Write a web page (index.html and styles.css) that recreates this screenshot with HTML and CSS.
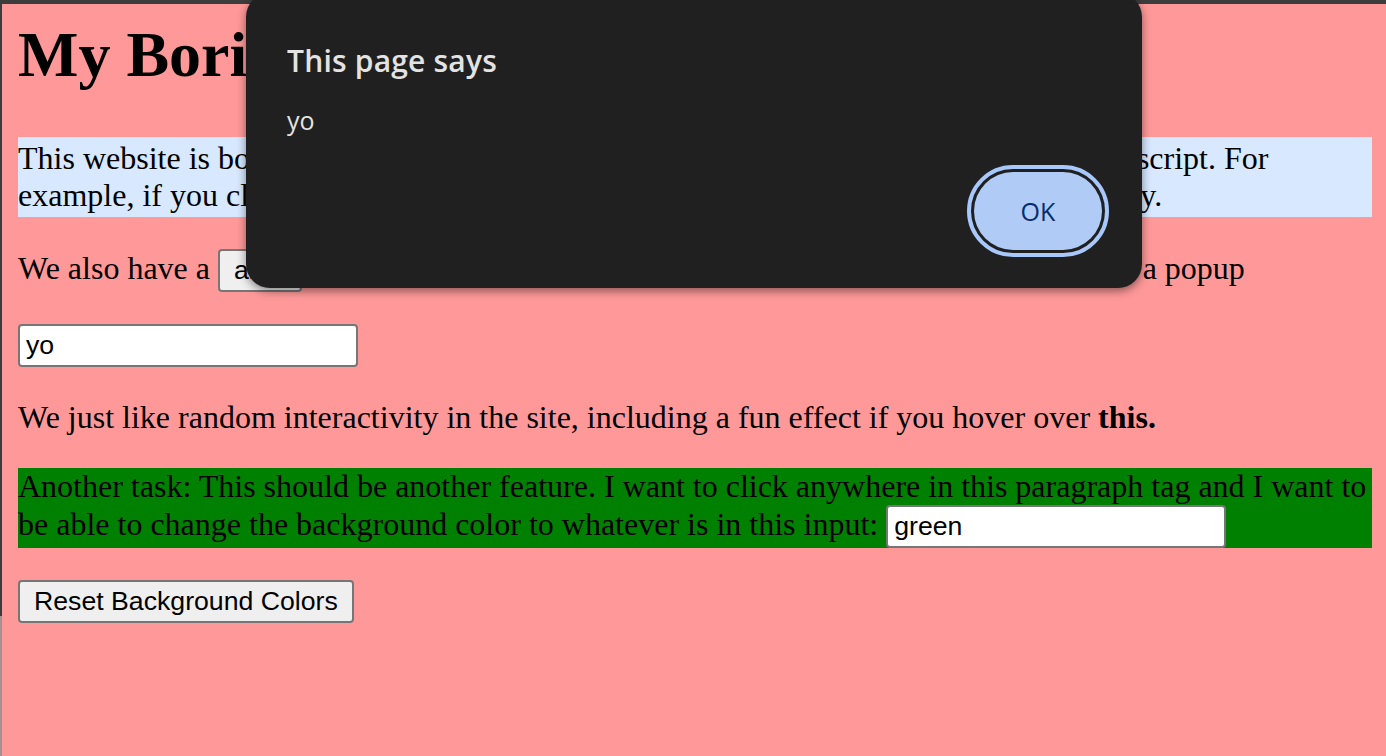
FILE: index.html
```html
<!DOCTYPE html>
<html lang="en">
<head>
<meta charset="utf-8">
<title>My Boring Website</title>
<link rel="stylesheet" href="styles.css">
</head>
<body>
<div class="frame-top"></div>
<div class="window">
  <div class="edge"></div>
  <main class="page">
    <h1 class="title">My Boring Website</h1>
    <p class="intro">This website is boring, so we want to make it more interesting by including a little Javascript. For example, if you click on this paragraph, the background color will then change randomly.</p>
    <p class="line">We also have a <button class="btn">alert</button> button that will show what you type into the input field below in a popup</p>
    <p class="line"><input class="field" type="text" value="yo"></p>
    <p class="line">We just like random interactivity in the site, including a fun effect if you hover over <b>this.</b></p>
    <p class="task">Another task: This should be another feature. I want to click anywhere in this paragraph tag and I want to be able to change the background color to whatever is in this input: <input class="field" type="text" value="green"></p>
    <p class="line"><button class="btn">Reset Background Colors</button></p>
  </main>
</div>
<div class="dialog">
  <div class="dialog-title">This page says</div>
  <div class="dialog-msg">yo</div>
  <div class="dialog-actions">
    <button class="ok">OK</button>
  </div>
</div>
</body>
</html>
```
FILE: styles.css
```css
html, body {
  margin: 0;
  padding: 0;
  height: 100%;
  overflow: hidden;
}
body {
  background: #ff9999;
  font-family: "Liberation Serif", "Times New Roman", serif;
  font-size: 32px;
  color: #000;
  display: flex;
  flex-direction: column;
}
.frame-top {
  height: 4px;
  background: #3c3c3c;
  flex: none;
}
.window {
  flex: 1;
  display: flex;
}
.edge {
  width: 2px;
  flex: none;
  background: linear-gradient(#3c3c3c 0 612px, #a89090 612px);
}
.page {
  flex: 1;
  padding: 0 14px 0 16px;
}
.title {
  font-size: 64px;
  font-weight: bold;
  margin: 14px 0 45px;
}
p {
  margin: 32px 0;
}
.intro {
  background: #d7e8ff;
  padding: 3px 0;
}
.task {
  background: #008000;
}
.btn {
  font-family: "Liberation Sans", Arial, sans-serif;
  font-size: 26.67px;
  color: #000;
  background: #efefef;
  border: 2px solid #767676;
  border-radius: 4px;
  padding: 2px 14px;
  height: 43px;
  vertical-align: baseline;
}
.field {
  font-family: "Liberation Sans", Arial, sans-serif;
  font-size: 26.67px;
  color: #000;
  background: #fff;
  border: 2px solid #767676;
  border-radius: 4px;
  padding: 2px 6px;
  width: 340px;
  height: 43px;
  box-sizing: border-box;
}
.dialog {
  position: absolute;
  left: 246px;
  top: -7px;
  width: 896px;
  height: 295px;
  box-sizing: border-box;
  background: #202020;
  border-radius: 24px;
  box-shadow: 0 3px 10px rgba(0, 0, 0, 0.45);
  padding: 50px 40px 0 41px;
  font-family: "Open Sans", "Noto Sans", sans-serif;
  color: #e3e3e3;
}
.dialog-title {
  font-size: 30px;
  font-weight: 600;
  line-height: 36px;
  letter-spacing: 0.2px;
}
.dialog-msg {
  font-size: 25px;
  line-height: 34px;
  margin-top: 24px;
}
.dialog-actions {
  display: flex;
  justify-content: flex-end;
  margin-top: 35px;
}
.ok {
  width: 128px;
  height: 78px;
  border-radius: 39px;
  border: none;
  background: #b0cbf6;
  color: #062e6f;
  font-family: "Open Sans", "Noto Sans", sans-serif;
  font-size: 25px;
  font-weight: 500;
  outline: 4px solid #a8c7fa;
  outline-offset: 3px;
  box-shadow: 0 0 0 3px #202020;
}
```
